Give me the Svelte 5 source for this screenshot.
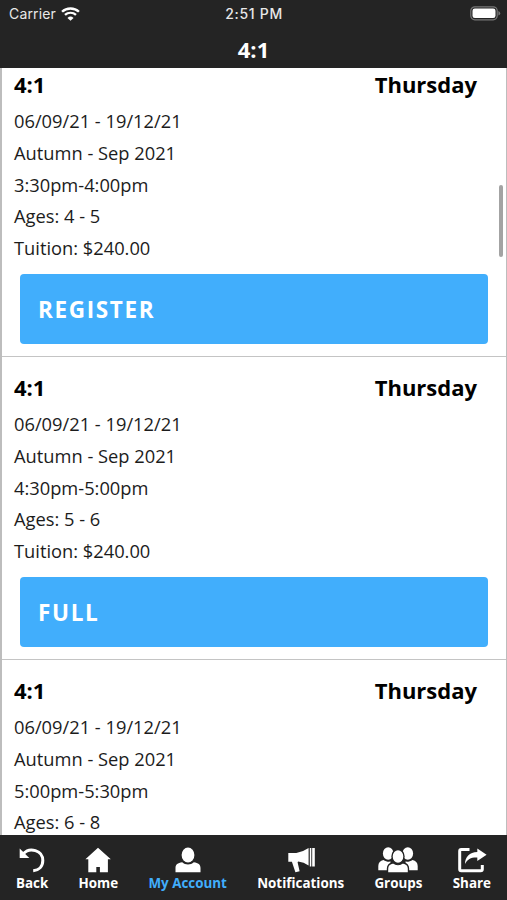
<script>
    const classes = [
        { name: '4:1', day: 'Thursday', time: '3:30pm-4:00pm', ages: '4 - 5', action: 'REGISTER' },
        { name: '4:1', day: 'Thursday', time: '4:30pm-5:00pm', ages: '5 - 6', action: 'FULL' },
        { name: '4:1', day: 'Thursday', time: '5:00pm-5:30pm', ages: '6 - 8' }
    ]

    const tabs = ['Back', 'Home', 'My Account', 'Notifications', 'Groups', 'Share']
    let active = $state('My Account')
</script>

<div class="app">
    <header>
        <div class="status">
            <span class="carrier">
                Carrier
                <svg width="19" height="14" viewBox="0 0 18 14" preserveAspectRatio="none" fill="none" stroke="#fff">
                    <path d="M1 4.8a11.3 11.3 0 0 1 16 0" stroke-width="2.3" />
                    <path d="M3.8 7.9a7.4 7.4 0 0 1 10.4 0" stroke-width="2.2" />
                    <path d="M9 13.8 6.1 10.9a4.1 4.1 0 0 1 5.8 0z" fill="#fff" stroke="none" />
                </svg>
            </span>
            <span class="clock">2:51 PM</span>
            <svg class="battery" width="31" height="15" viewBox="0 0 31 15">
                <rect x=".8" y=".8" width="26.4" height="13" rx="4" fill="none" stroke="#777" stroke-width="1.2" />
                <rect x="2.5" y="2.5" width="23" height="9.6" rx="2.3" fill="#fff" />
                <path d="M28.4 5v4.6q1.8-.7 1.8-2.3T28.4 5z" fill="#777" />
            </svg>
        </div>
        <h1>4:1</h1>
    </header>

    <main>
        <div class="list">
            {#each classes as item}
                <section>
                    <h2><span>{item.name}</span><span>{item.day}</span></h2>
                    <p>06/09/21 - 19/12/21</p>
                    <p>Autumn - Sep 2021</p>
                    <p>{item.time}</p>
                    <p>Ages: {item.ages}</p>
                    {#if item.action}
                        <p>Tuition: $240.00</p>
                        <button>{item.action}</button>
                    {/if}
                </section>
            {/each}
        </div>
        <div class="thumb"></div>
    </main>

    <nav>
        {#each tabs as tab}
            <a href="#{tab}" class:active={active === tab} onclick={() => active = tab}>
                <svg width="40" height="28" viewBox="0 0 40 28" fill="#fff">
                    {#if tab === 'Back'}
                        <path d="M7.7 1.4v9.6h9.6z" />
                        <path d="M11.5 6.6C17.500-.2 30.800 3 30.800 13.500c0 6.100-4 9.800-9.600 10.200" fill="none" stroke="#fff" stroke-width="3" />
                    {:else if tab === 'Home'}
                        <path d="M20 .8 32.800 12.300h-2.900v13h-8v-5.200h-3.600v5.200h-8v-13H7.400z" />
                    {:else if tab === 'My Account'}
                        <ellipse cx="20" cy="8" rx="6.4" ry="7.6" />
                        <path d="M7.5 25.200v-4.200c0-3.400 2.200-5.300 6.700-5.800 3.300 3 8.300 3 11.600 0 4.500.5 6.700 2.400 6.700 5.800v4.200z" />
                    {:else if tab === 'Notifications'}
                        <path d="M7.300 6h8q6.500-1 12.300-5v17.500q-4.800-3.300-10.400-4l-.6.7 2 9-4.200 1.100-3.500-10.600H7.300z" />
                        <path d="M28.800 1h1.500v18.500h-1.500zM31.200 1h2.600v18.500h-2.600z" />
                    {:else if tab === 'Groups'}
                        <ellipse cx="10.2" cy="6.5" rx="5.3" ry="6.2" />
                        <ellipse cx="29.800" cy="6.500" rx="5.300" ry="6.200" />
                        <path d="M.3 23.300v-4.200c0-3.600 2-5.800 5.200-6.200 2 1.500 4.500 2 7 1.700v8.700zM39.700 23.300v-4.200c0-3.600-2-5.800-5.200-6.200-2 1.500-4.500 2-7 1.700v8.700z" />
                        <path d="M9.500 26v-4.200c0-3.500 2-5.400 5.700-6 2.800 2.400 6.800 2.400 9.600 0 3.700.6 5.700 2.500 5.700 6V26z" stroke="#242424" stroke-width="1.400" />
                        <ellipse cx="20" cy="9.500" rx="6" ry="7" stroke="#242424" stroke-width="1.400" />
                    {:else}
                        <path d="M17.500 2.600H9.300q-1.600 0-1.600 1.600v18q0 1.500 1.600 1.500h19.400q1.600 0 1.600-1.500V18" fill="none" stroke="#fff" stroke-width="3" />
                        <path d="M25.300 1.500 34.600 7.700 25.300 14v-3.500c-6-.3-9.800 1.500-12.300 6.500 0-6.800 4.500-11.800 12.300-12z" />
                    {/if}
                </svg>
                {tab}
            </a>
        {/each}
    </nav>
</div>

<style>
    :global(body) {
        margin: 0;
    }

    .app {
        background-color: #fff;
        color: #000;
        display: flex;
        flex-direction: column;
        font-family: "Open Sans", "Noto Sans", sans-serif;
        height: 900px;
        overflow: hidden;
        width: 507px;
    }

    header {
        background-color: #242424;
        color: #fff;
        flex: none;
        height: 68px;
    }

    .status {
        align-items: center;
        color: #e8e8e8;
        display: grid;
        font-family: Inter, sans-serif;
        font-size: 14px;
        grid-template-columns: 1fr auto 1fr;
        height: 27px;
        letter-spacing: .15px;
        padding: 0 6px 0 9px;
    }

    .carrier {
        align-items: center;
        display: flex;
        gap: 5px;
    }

    .clock {
        font-weight: 500;
        letter-spacing: .7px;
        margin-right: 2px;
    }

    .battery {
        justify-self: end;
    }

    h1 {
        font-size: 22px;
        font-weight: 700;
        line-height: 44px;
        margin: 0;
        text-align: center;
    }

    main {
        border-left: 2px solid #bdbdbd;
        border-right: 1px solid #bdbdbd;
        flex: 1;
        min-height: 0;
        overflow: hidden;
        position: relative;
    }

    .list {
        margin-top: -14px;
    }

    section {
        border-bottom: 1px solid #c4c4c4;
        box-sizing: border-box;
        height: 303px;
        padding: 12px 18px 0 12px;
    }

    h2 {
        display: flex;
        font-size: 22px;
        font-weight: 700;
        justify-content: space-between;
        line-height: 36px;
        margin: 0 11px 3px 0;
    }

    p {
        color: #1c1c1c;
        font-size: 18.3px;
        line-height: 31.75px;
        margin: 0;
    }

    button {
        background-color: #41aefc;
        border: 0;
        border-radius: 4px;
        color: #fff;
        display: block;
        font-family: inherit;
        font-size: 22.5px;
        font-weight: 700;
        height: 70px;
        letter-spacing: 1.65px;
        margin: 10px 0 0 6px;
        padding: 1px 18px 0;
        text-align: left;
        width: calc(100% - 6px);
    }

    .thumb {
        background-color: #a3a3a3;
        border-radius: 2px;
        height: 72px;
        position: absolute;
        right: 3px;
        top: 117px;
        width: 4px;
    }

    nav {
        background-color: #242424;
        box-sizing: border-box;
        display: flex;
        flex: none;
        height: 65px;
        justify-content: space-between;
        padding: 12px 16px 0;
    }

    a {
        align-items: center;
        color: #fff;
        display: flex;
        flex-direction: column;
        font-size: 13.4px;
        font-weight: 700;
        line-height: 17px;
        text-decoration: none;
        white-space: nowrap;
    }

    a svg {
        margin: 0 -4px;
    }

    .active {
        color: #41aefc;
    }
</style>
